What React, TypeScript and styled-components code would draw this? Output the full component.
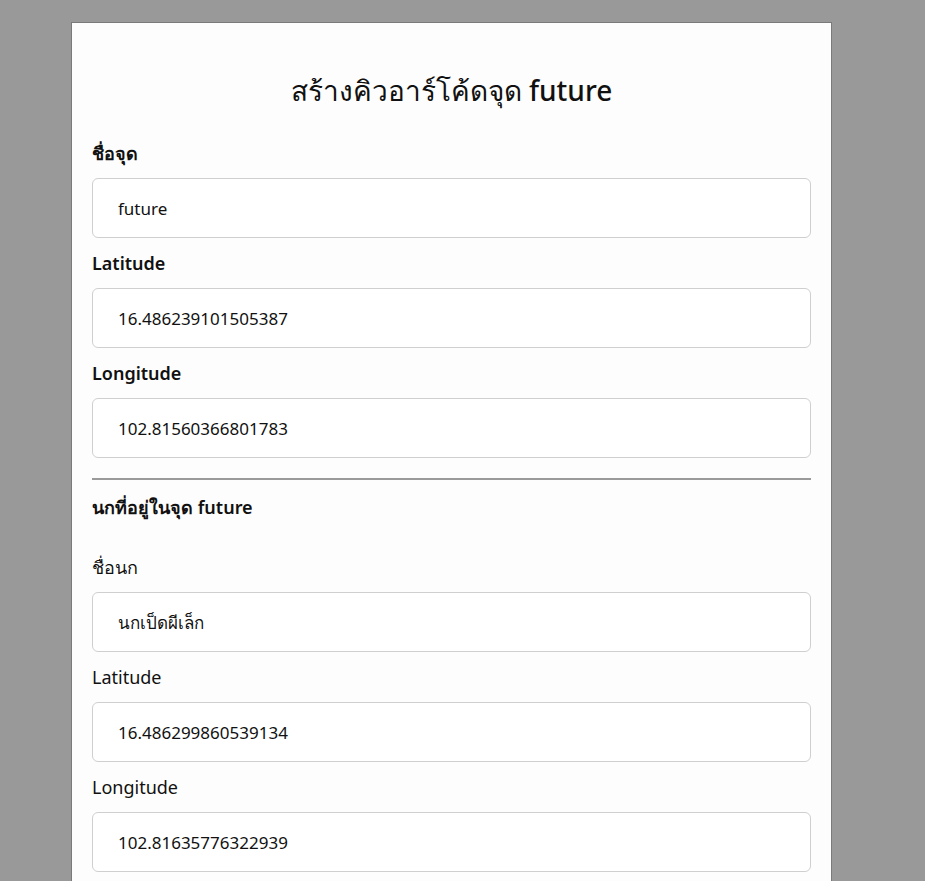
import React from "react";
import styled, { createGlobalStyle } from "styled-components";

const Global = createGlobalStyle`
  html, body { margin: 0; padding: 0; background: #999999; }
  body { font-family: "Noto Sans", Roboto, "DejaVu Sans", sans-serif; color: #111; }
  * { box-sizing: border-box; }
`;

const Page = styled.div`
  padding: 22px 0 0 71px;
  min-height: 881px;
`;

const Card = styled.div`
  width: 761px;
  min-height: 880px;
  background: #fdfdfd;
  border: 1px solid #7a7a7a;
  border-bottom: none;
  padding: 48px 20px 0 20px;
`;

const Title = styled.h1`
  margin: 0 0 19px 0;
  text-align: center;
  font-size: 28px;
  font-weight: 500;
  line-height: 38px;
`;

const Field = styled.div`
  display: flex;
  flex-direction: column;
`;

const Label = styled.label<{ $bold?: boolean }>`
  font-size: 18px;
  line-height: 24px;
  font-weight: ${(p) => (p.$bold ? 600 : 400)};
  margin: 13px 0 13px;
`;

const Input = styled.input`
  width: 100%;
  height: 60px;
  border: 1px solid #cfcfcf;
  border-radius: 6px;
  background: #ffffff;
  padding: 0 25px;
  font-family: inherit;
  font-size: 17px;
  color: #111;
  outline: none;
`;

const Divider = styled.hr`
  margin: 20px 0 0 0;
  border: none;
  border-top: 2px solid #9a9a9a;
  height: 0;
`;

const Section = styled.h2`
  margin: 15px 0 23px 0;
  font-size: 18px;
  font-weight: 600;
  line-height: 24px;
`;

const point = [
  { label: "ชื่อจุด", value: "future" },
  { label: "Latitude", value: "16.486239101505387" },
  { label: "Longitude", value: "102.81560366801783" },
];

const bird = [
  { label: "ชื่อนก", value: "นกเป็ดผีเล็ก" },
  { label: "Latitude", value: "16.486299860539134" },
  { label: "Longitude", value: "102.81635776322939" },
];

export default function App() {
  return (
    <>
      <Global />
      <Page>
        <Card>
          <Title>สร้างคิวอาร์โค้ดจุด future</Title>
          {point.map((f) => (
            <Field key={f.label}>
              <Label $bold>{f.label}</Label>
              <Input defaultValue={f.value} readOnly />
            </Field>
          ))}
          <Divider />
          <Section>นกที่อยู่ในจุด future</Section>
          {bird.map((f) => (
            <Field key={f.label}>
              <Label>{f.label}</Label>
              <Input defaultValue={f.value} readOnly />
            </Field>
          ))}
        </Card>
      </Page>
    </>
  );
}
